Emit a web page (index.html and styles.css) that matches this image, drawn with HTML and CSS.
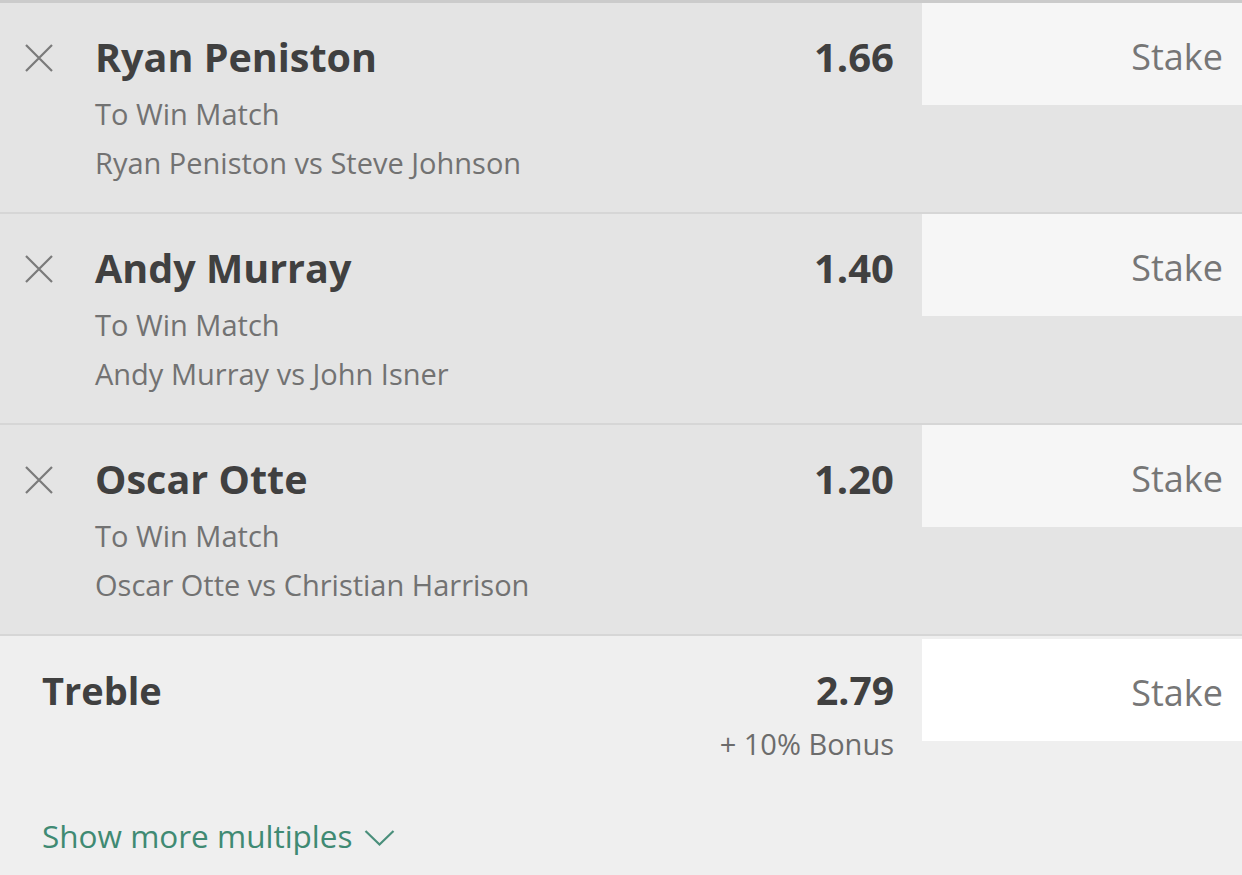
FILE: index.html
```html
<!DOCTYPE html>
<html lang="en">
<head>
<meta charset="utf-8">
<title>Bet Slip</title>
<link rel="stylesheet" href="styles.css">
</head>
<body>
<div class="slip">
  <div class="bet">
    <div class="close">
      <svg class="x-icon" width="30" height="30" viewBox="0 0 30 30"><path d="M2 2 L28 28 M28 2 L2 28" /></svg>
    </div>
    <div class="info">
      <div class="name">Ryan Peniston</div>
      <div class="sub sub-first">To Win Match</div>
      <div class="sub">Ryan Peniston vs Steve Johnson</div>
    </div>
    <div class="odds">1.66</div>
    <div class="stake">Stake</div>
  </div>
  <div class="bet">
    <div class="close">
      <svg class="x-icon" width="30" height="30" viewBox="0 0 30 30"><path d="M2 2 L28 28 M28 2 L2 28" /></svg>
    </div>
    <div class="info">
      <div class="name">Andy Murray</div>
      <div class="sub sub-first">To Win Match</div>
      <div class="sub">Andy Murray vs John Isner</div>
    </div>
    <div class="odds">1.40</div>
    <div class="stake">Stake</div>
  </div>
  <div class="bet">
    <div class="close">
      <svg class="x-icon" width="30" height="30" viewBox="0 0 30 30"><path d="M2 2 L28 28 M28 2 L2 28" /></svg>
    </div>
    <div class="info">
      <div class="name">Oscar Otte</div>
      <div class="sub sub-first">To Win Match</div>
      <div class="sub">Oscar Otte vs Christian Harrison</div>
    </div>
    <div class="odds">1.20</div>
    <div class="stake">Stake</div>
  </div>
  <div class="multiples">
    <div class="treble">
      <div class="treble-name">Treble</div>
      <div class="treble-odds">
        <div class="odds-value">2.79</div>
        <div class="bonus">+ 10% Bonus</div>
      </div>
      <div class="stake stake-white">Stake</div>
    </div>
    <div class="more">
      <span>Show more multiples</span>
      <svg class="chevron" width="31" height="18" viewBox="0 0 31 18"><path d="M1.5 2 L15.5 15.5 L29.5 2" /></svg>
    </div>
  </div>
</div>
</body>
</html>
```
FILE: styles.css
```css
html, body {
  margin: 0;
  padding: 0;
  background: #efefef;
}

body {
  font-family: "Open Sans", "Noto Sans", sans-serif;
  color: #3c3c3c;
}

.slip {
  border-top: 3px solid #cbcbcb;
}

.bet {
  display: flex;
  align-items: flex-start;
  height: 211px;
  box-sizing: border-box;
  background: #e4e4e4;
  border-bottom: 2px solid #d6d6d6;
}

.close {
  width: 95px;
  flex: none;
  padding-top: 40px;
}

.x-icon {
  display: block;
  margin-left: 24px;
}

.x-icon path {
  fill: none;
  stroke: #7a7a7a;
  stroke-width: 2.2;
}

.info {
  flex: 1;
  padding-top: 32px;
}

.name {
  font-size: 39.5px;
  font-weight: 700;
  line-height: 44px;
  color: #404040;
}

.sub {
  font-size: 29px;
  line-height: 49px;
  color: #727272;
}

.sub-first {
  margin-top: 10px;
}

.odds {
  padding-top: 32px;
  padding-right: 28px;
  font-size: 40px;
  font-weight: 700;
  line-height: 44px;
  color: #404040;
}

.stake {
  width: 320px;
  flex: none;
  height: 102px;
  box-sizing: border-box;
  padding-top: 8px;
  padding-right: 19px;
  line-height: 91px;
  text-align: right;
  font-size: 36px;
  color: #767676;
  background: #f6f6f6;
}

.multiples {
  background: #efefef;
  padding-bottom: 30px;
}

.treble {
  display: flex;
  align-items: flex-start;
}

.treble-name {
  flex: 1;
  padding-left: 42px;
  padding-top: 32px;
  font-size: 38px;
  font-weight: 700;
  line-height: 44px;
  color: #404040;
}

.treble-odds {
  padding-top: 32px;
  padding-right: 28px;
  text-align: right;
}

.odds-value {
  font-size: 39px;
  font-weight: 700;
  line-height: 44px;
  color: #404040;
}

.bonus {
  margin-top: 12px;
  font-size: 29px;
  line-height: 40px;
  color: #6c6c6c;
}

.stake-white {
  background: #ffffff;
  margin-top: 3px;
}

.more {
  display: flex;
  align-items: center;
  margin-top: 50px;
  padding-left: 42px;
  font-size: 31.5px;
  line-height: 44px;
  color: #3f8a73;
}

.chevron {
  margin-left: 11px;
  margin-top: 4px;
}

.chevron path {
  fill: none;
  stroke: #4a8f7b;
  stroke-width: 2.2;
}
```
